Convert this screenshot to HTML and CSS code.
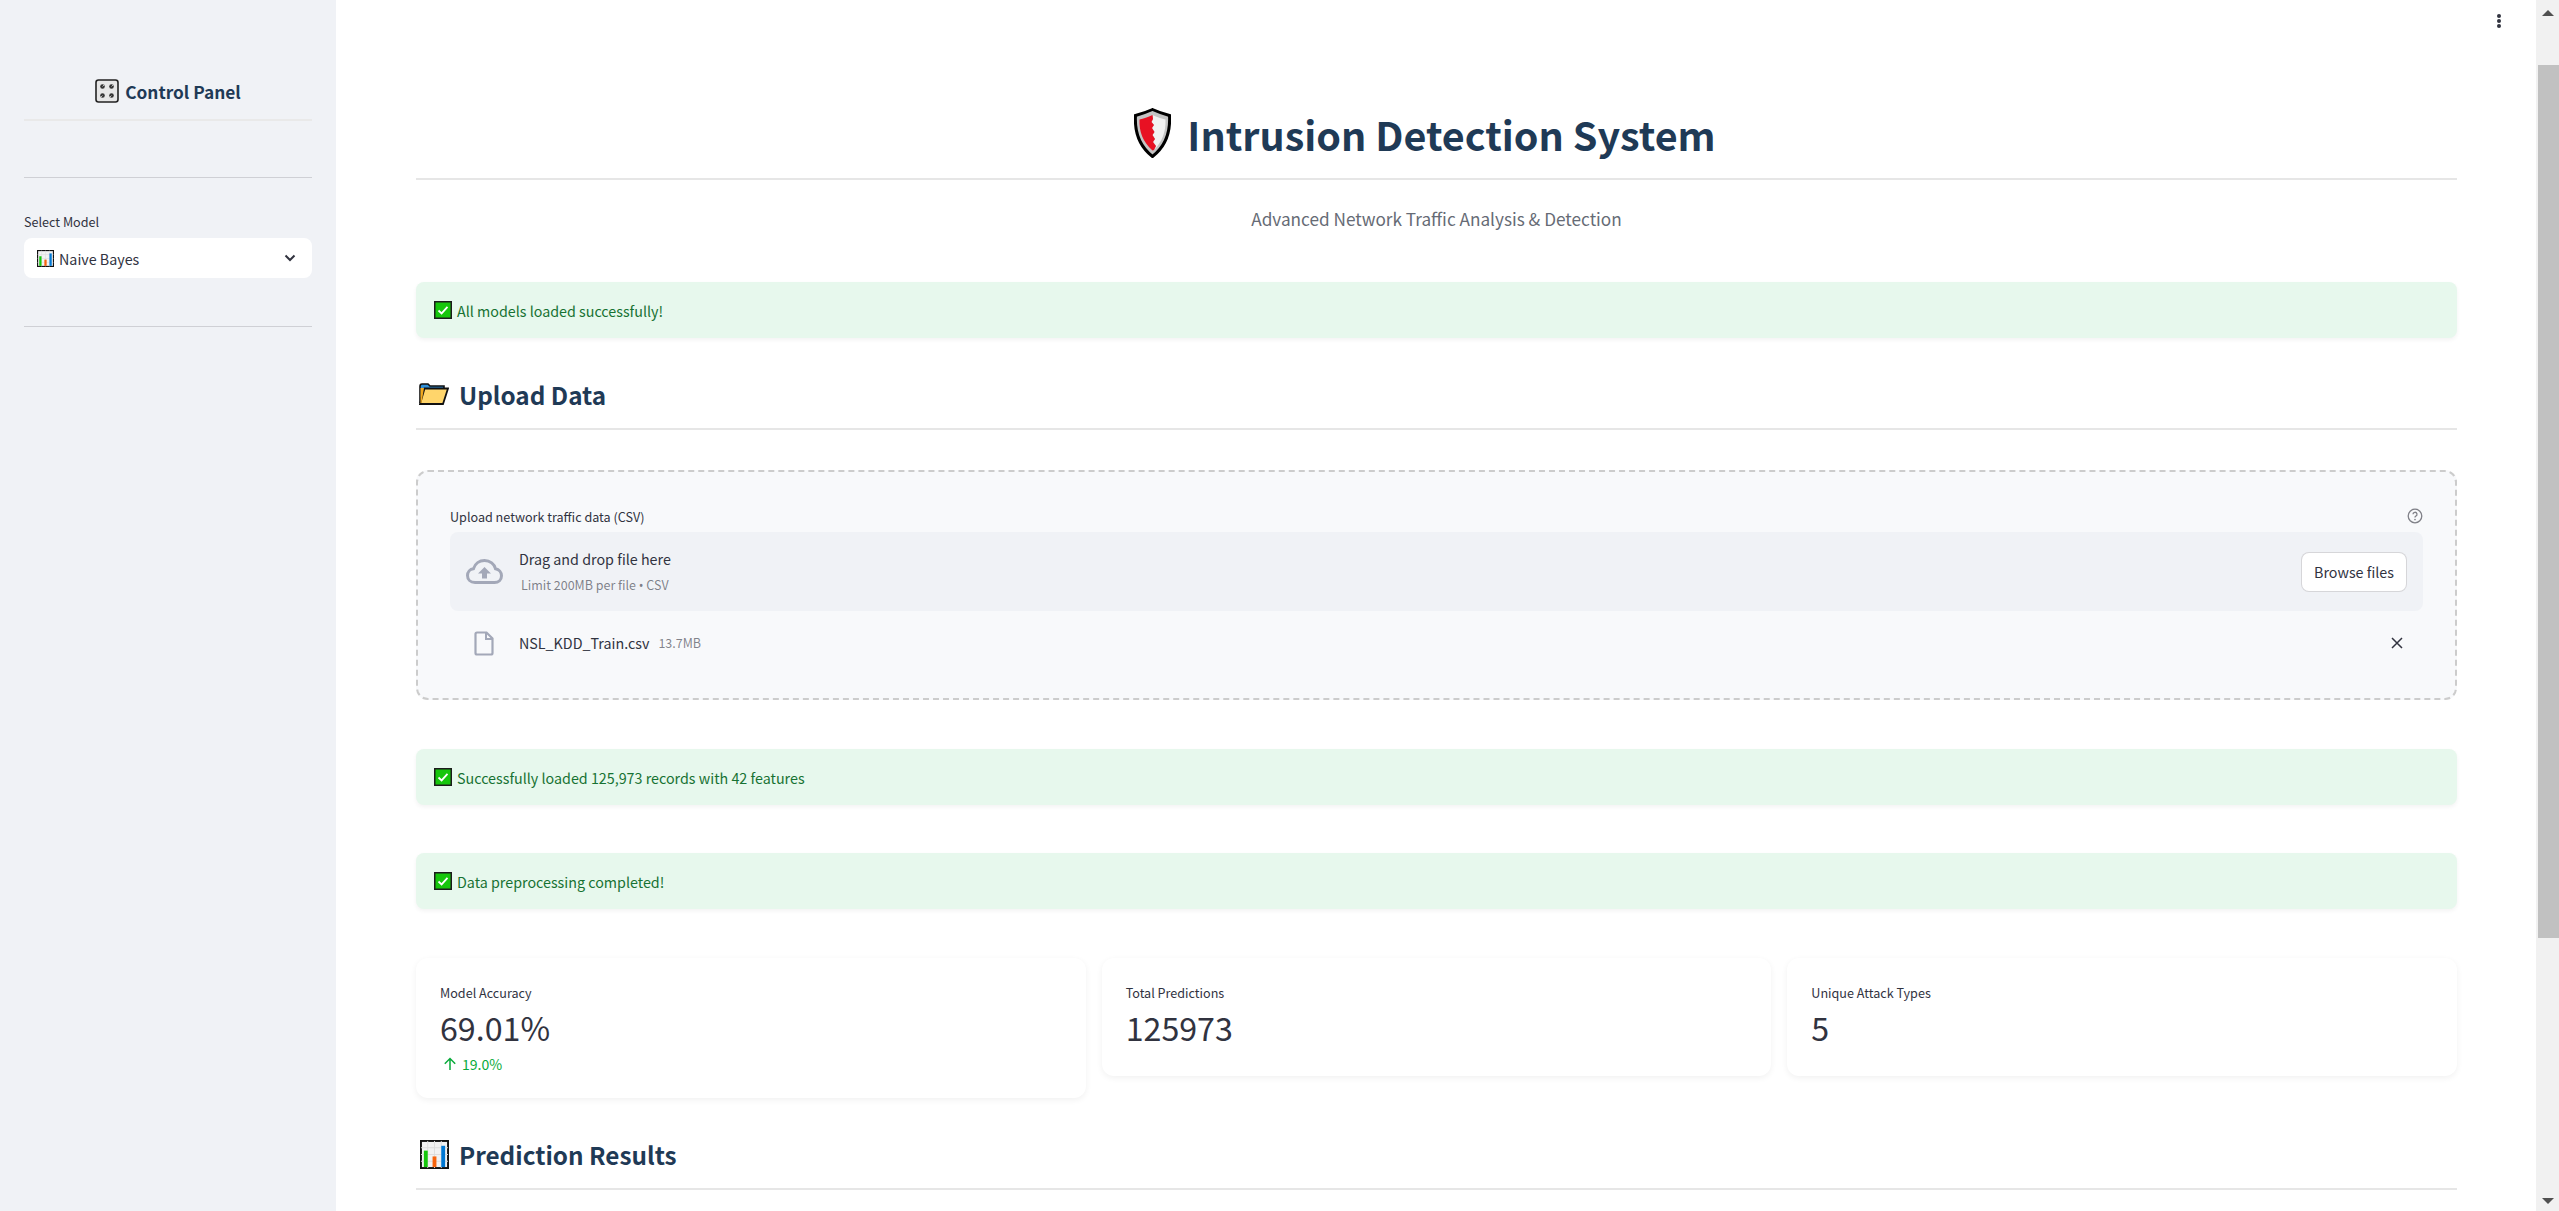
FILE: index.html
```html
<!DOCTYPE html>
<html lang="en">
<head>
    <meta charset="UTF-8">
    <meta name="viewport" content="width=device-width, initial-scale=1.0">
    <title>Intrusion Detection System</title>
    <link rel="stylesheet" href="styles.css">
</head>
<body>
    <svg class="icon-defs" width="0" height="0">
        <defs>
            <symbol id="check" viewBox="0 0 18 18">
                <rect x="0.75" y="0.75" width="16.5" height="16.5" fill="#16c60c" stroke="#1c1c1c" stroke-width="1.5"/>
                <path d="M4.5 9.5 7.6 12.4 13.5 5.8" fill="none" stroke="#fff" stroke-width="1.8"/>
            </symbol>
            <symbol id="chart" viewBox="0 0 30 30">
                <rect x="1" y="1" width="28" height="28" fill="#f2f2f2" stroke="#111" stroke-width="2"/>
                <path d="M1 8H29M1 15H29M1 22H29M8 1V29M15 1V29M22 1V29" stroke="#ddd" stroke-width="1"/>
                <rect x="4" y="11" width="4" height="17" fill="#16c60c"/>
                <rect x="13" y="17" width="4" height="11" fill="#f7630c"/>
                <rect x="22" y="6" width="4" height="22" fill="#0078d4"/>
            </symbol>
        </defs>
    </svg>

    <div class="app">
        <aside class="sidebar">
            <h3 class="sidebar-title">
                <svg class="knobs" viewBox="0 0 24 24">
                    <rect x="1" y="1" width="22" height="22" rx="2.5" fill="#e6e6e6" stroke="#222" stroke-width="1.6"/>
                    <circle cx="7.5" cy="7.5" r="2.3" fill="#333"/>
                    <circle cx="16.5" cy="7.5" r="2.3" fill="#333"/>
                    <circle cx="7.5" cy="16.5" r="2.3" fill="#333"/>
                    <circle cx="16.5" cy="16.5" r="2.3" fill="#333"/>
                    <path d="M7.5 7.5 9 6M16.5 7.5 18 6M7.5 16.5 6 18M16.5 16.5 15 18" stroke="#bbb" stroke-width="1"/>
                </svg>
                Control Panel
            </h3>
            <hr class="rule-light">
            <hr class="rule-grey first">
            <label class="select-label">Select Model</label>
            <div class="select-box">
                <svg class="select-icon"><use href="#chart"/></svg>
                <span>Naive Bayes</span>
                <svg class="chevron" viewBox="0 0 12 8"><path d="M1.5 1.5 6 6l4.500-4.500" fill="none" stroke="#31333f" stroke-width="2"/></svg>
            </div>
            <hr class="rule-grey second">
        </aside>

        <main class="main">
            <div class="menu-dots"><i></i><i></i><i></i></div>

            <h1 class="page-title">
                <svg class="shield" viewBox="0 0 37 50">
                    <path d="M18.500 1.500C24 4 30 6 35.500 7.500 36.500 24 32 38 18.500 48.500 5 38 0.500 24 1.500 7.500 7 6 13 4 18.500 1.500Z" fill="#c4c4c4" stroke="#000" stroke-width="3"/>
                    <path d="M18.500 7C23 9 27.500 10.500 31.500 11.500 32 24 28 34 20 42L22 38 19 34 21 31 18.500 27 20.500 24 18 20 20 17 17.500 14 19 11Z" fill="#f1f1f1"/>
                    <path d="M18.500 7C14 9 9.500 10.500 5.500 11.500 5 24 9 34 18.500 42.500L20 42 22 38 19 34 21 31 18.500 27 20.500 24 18 20 20 17 17.500 14 19 11Z" fill="#e81123"/>
                </svg>
                Intrusion Detection System
            </h1>
            <p class="subtitle">Advanced Network Traffic Analysis &amp; Detection</p>

            <div class="alert first">
                <svg class="check"><use href="#check"/></svg>
                All models loaded successfully!
            </div>

            <h2 class="section-title upload-title">
                <svg class="folder" viewBox="0 0 30 22">
                    <path d="M1 20V3.500Q1 1 3 1H9L11 3H25V6H5Z" fill="#2f8fd8" stroke="#111" stroke-width="1.600"/>
                    <path d="M1 21 5.500 5.500H29L24 21Z" fill="#ffd56b" stroke="#111" stroke-width="1.800"/>
                    <path d="M1.500 20V5H5L2.500 20Z" fill="#f2a81d"/>
                </svg>
                Upload Data
            </h2>

            <section class="uploader">
                <div class="uploader-label">
                    <span>Upload network traffic data (CSV)</span>
                    <svg class="help" viewBox="0 0 16 16">
                        <circle cx="8" cy="8" r="6.800" fill="none" stroke="#808188" stroke-width="1.300"/>
                        <path d="M6 6.300A2 2 0 1 1 8.800 8.100C8.200 8.400 8 8.800 8 9.500" fill="none" stroke="#808188" stroke-width="1.300"/>
                        <circle cx="8" cy="11.500" r="0.850" fill="#808188"/>
                    </svg>
                </div>
                <div class="dropzone">
                    <svg class="cloud" viewBox="0 0 37 25">
                        <path d="M9 23.500C4.500 23.500 1.500 20.500 1.500 16.500 1.500 13 4 10 7.500 9.700 9 4.500 13.500 1.500 18.500 1.500 24 1.500 28.500 5 29.500 9.800 33 10.500 35.500 13.300 35.500 16.800 35.500 20.800 32.500 23.500 28.500 23.500Z" fill="none" stroke="#a3a8b8" stroke-width="3"/>
                        <path d="M18.500 8 25 14.500H21V19.500H16V14.500H12Z" fill="#a3a8b8"/>
                    </svg>
                    <div class="drop-text">
                        <div class="drop-main">Drag and drop file here</div>
                        <div class="drop-limit">Limit 200MB per file <span class="bullet">&bull;</span> CSV</div>
                    </div>
                    <button class="browse" type="button">Browse files</button>
                </div>
                <div class="file-row">
                    <svg class="file-icon" viewBox="0 0 20 25">
                        <path d="M1.500 3Q1.500 1.500 3 1.500H12.500L18.500 7.500V22Q18.500 23.500 17 23.500H3Q1.500 23.500 1.500 22Z" fill="none" stroke="#a3a8b8" stroke-width="2.200"/>
                        <path d="M12 1.500V8H18.500" fill="none" stroke="#a3a8b8" stroke-width="2"/>
                    </svg>
                    <span class="file-name">NSL_KDD_Train.csv</span>
                    <span class="file-size">13.7MB</span>
                    <svg class="file-close" viewBox="0 0 12 12"><path d="M1 1 11 11M11 1 1 11" stroke="#31333f" stroke-width="1.500"/></svg>
                </div>
            </section>

            <div class="alert second">
                <svg class="check"><use href="#check"/></svg>
                Successfully loaded 125,973 records with 42 features
            </div>
            <div class="alert third">
                <svg class="check"><use href="#check"/></svg>
                Data preprocessing completed!
            </div>

            <div class="metrics">
                <div class="metric">
                    <div class="metric-label">Model Accuracy</div>
                    <div class="metric-value">69.01%</div>
                    <div class="metric-delta">
                        <svg class="delta-arrow" viewBox="0 0 14 14"><path d="M7 13V1.500M1.800 6.700 7 1.500l5.200 5.200" fill="none" stroke="#09ab3b" stroke-width="1.500"/></svg>
                        19.0%
                    </div>
                </div>
                <div class="metric">
                    <div class="metric-label">Total Predictions</div>
                    <div class="metric-value">125973</div>
                </div>
                <div class="metric">
                    <div class="metric-label">Unique Attack Types</div>
                    <div class="metric-value">5</div>
                </div>
            </div>

            <h2 class="section-title results-title">
                <svg class="results-icon"><use href="#chart"/></svg>
                Prediction Results
            </h2>
        </main>

        <div class="scrollbar">
            <div class="arrow-up"></div>
            <div class="thumb"></div>
            <div class="arrow-down"></div>
        </div>
    </div>
</body>
</html>
```

FILE: styles.css
```css
html, body {
    margin: 0;
    height: 100%;
    overflow: hidden;
}
body {
    font-family: "Noto Sans CJK SC", "Noto Sans", sans-serif;
    color: #31333f;
    background-color: #fff;
    font-size: 14.3px;
}
.icon-defs {
    display: block;
    height: 0;
}
hr {
    border: none;
    margin: 0;
}
svg {
    display: block;
    flex-shrink: 0;
}

.app {
    display: flex;
    height: 1211px;
    overflow: hidden;
}

/* sidebar */
.sidebar {
    width: 336px;
    flex-shrink: 0;
    box-sizing: border-box;
    padding: 75px 24px 0;
    background-color: #f0f2f6;
}
.sidebar-title {
    display: flex;
    justify-content: center;
    align-items: center;
    gap: 6px;
    margin: 0;
    height: 32px;
    font-size: 17.300px;
    font-weight: 600;
    color: #1f3a56;
}
.knobs {
    width: 24px;
    height: 24px;
}
.rule-light {
    height: 2px;
    margin-top: 12px;
    background-color: #e9e9e9;
}
.rule-grey {
    height: 1px;
    background-color: #cfd0d5;
}
.rule-grey.first {
    margin-top: 56px;
}
.rule-grey.second {
    margin-top: 48px;
}
.select-label {
    display: block;
    margin-top: 34px;
    height: 20px;
    line-height: 20px;
    font-size: 12.6px;
}
.select-box {
    display: flex;
    align-items: center;
    height: 40px;
    margin-top: 6px;
    padding: 0 13px;
    background-color: #fff;
    border-radius: 8px;
}
.select-icon {
    width: 17px;
    height: 17px;
    margin-right: 5px;
}
.chevron {
    width: 12px;
    height: 8px;
    margin-left: auto;
    margin-right: 3px;
}

/* main column */
.main {
    position: relative;
    flex: 1;
    min-width: 0;
    box-sizing: border-box;
    padding: 0 79px 0 80px;
}
.menu-dots {
    position: absolute;
    top: 14px;
    right: 35px;
    display: flex;
    flex-direction: column;
    gap: 1px;
}
.menu-dots i {
    display: block;
    width: 4px;
    height: 4px;
    border-radius: 50%;
    background-color: #31333f;
}
.page-title {
    display: flex;
    justify-content: center;
    align-items: center;
    gap: 16px;
    height: 68px;
    margin: 0;
    padding: 99px 23px 11px 0;
    border-bottom: 2px solid #e6e6e6;
    font-size: 39.500px;
    font-weight: 700;
    color: #1f3a56;
}
.shield {
    width: 37px;
    height: 50px;
}
.subtitle {
    margin: 25px 0 0;
    height: 28px;
    line-height: 28px;
    text-align: center;
    font-size: 17.200px;
    color: #666b75;
}

.alert {
    display: flex;
    align-items: center;
    gap: 5px;
    height: 56px;
    box-sizing: border-box;
    padding: 0 18px;
    background-color: #e7f8ed;
    border-radius: 8px;
    box-shadow: 0 2px 4px rgba(0, 0, 0, 0.05);
    color: #177233;
}
.alert.first {
    margin-top: 49px;
}
.alert.second {
    margin-top: 49px;
}
.alert.third {
    margin-top: 48px;
}
.check {
    width: 18px;
    height: 18px;
}

.section-title {
    display: flex;
    align-items: center;
    margin: 0;
    border-bottom: 2px solid #e6e6e6;
    font-size: 24.300px;
    font-weight: 600;
    color: #1f3a56;
}
.upload-title {
    height: 52px;
    margin-top: 30px;
    padding: 0 0 8px 3px;
    gap: 10px;
}
.folder {
    width: 30px;
    height: 22px;
}
.results-title {
    height: 52px;
    margin-top: 30px;
    padding: 0 0 8px 4px;
    gap: 10px;
}
.results-icon {
    width: 29px;
    height: 29px;
}

/* file uploader */
.uploader {
    margin-top: 40px;
    height: 230px;
    box-sizing: border-box;
    padding: 32px 32px 0;
    background-color: #f8f9fb;
    border: 2px dashed #cccccc;
    border-radius: 12px;
}
.uploader-label {
    display: flex;
    justify-content: space-between;
    align-items: center;
    box-sizing: border-box;
    height: 28px;
    padding-bottom: 4px;
    font-size: 12.600px;
}
.help {
    width: 16px;
    height: 16px;
}
.dropzone {
    display: flex;
    align-items: center;
    height: 79px;
    padding: 0 16px;
    background-color: #f0f2f6;
    border-radius: 8px;
}
.cloud {
    width: 37px;
    height: 25px;
    margin-right: 16px;
}
.drop-main {
    line-height: 24px;
}
.drop-limit {
    margin: 3px 0 0 2px;
    line-height: 22px;
    font-size: 12.500px;
    color: rgba(49, 51, 63, 0.6);
}
.bullet {
    font-family: "Noto Sans", sans-serif;
}
.browse {
    margin-left: auto;
    width: 106px;
    height: 40px;
    padding: 0;
    background-color: #fff;
    border: 1px solid rgba(49, 51, 63, 0.2);
    border-radius: 8px;
    font: inherit;
    color: #31333f;
}
.file-row {
    display: flex;
    align-items: center;
    height: 48px;
    margin-top: 8px;
    padding: 0 20px 0 24px;
}
.file-icon {
    width: 20px;
    height: 25px;
    margin-right: 25px;
}
.file-name {
    margin-bottom: 2px;
}
.file-size {
    margin: 0 0 2px 9px;
    font-size: 12.500px;
    color: rgba(49, 51, 63, 0.6);
}
.file-close {
    width: 12px;
    height: 12px;
    margin-left: auto;
}

/* metric cards */
.metrics {
    display: grid;
    grid-template-columns: repeat(3, 1fr);
    gap: 16px;
    align-items: start;
    margin-top: 49px;
}
.metric {
    box-sizing: border-box;
    padding: 24px;
    background-color: #fff;
    border-radius: 12px;
    box-shadow: 0 2px 6px rgba(0, 0, 0, 0.06);
}
.metric-label {
    height: 22px;
    line-height: 22px;
    font-size: 12.600px;
}
.metric-value {
    height: 48px;
    line-height: 46px;
    font-size: 32.200px;
}
.metric-delta {
    display: flex;
    align-items: center;
    gap: 5px;
    height: 20px;
    margin: 2px 0 0 3px;
    font-size: 14px;
    color: #09ab3b;
}
.delta-arrow {
    width: 14px;
    height: 14px;
}

/* fake scrollbar, the real page scrolls much further */
.scrollbar {
    display: flex;
    flex-direction: column;
    align-items: center;
    width: 23px;
    flex-shrink: 0;
    background-color: #f1f1f1;
}
.arrow-up {
    margin-top: 10px;
    border-left: 6px solid transparent;
    border-right: 6px solid transparent;
    border-bottom: 6px solid #505050;
}
.thumb {
    width: 21px;
    height: 873px;
    margin: 49px 0 260px 2px;
    background-color: #c1c1c1;
}
.arrow-down {
    border-left: 6px solid transparent;
    border-right: 6px solid transparent;
    border-top: 6px solid #505050;
}
```
